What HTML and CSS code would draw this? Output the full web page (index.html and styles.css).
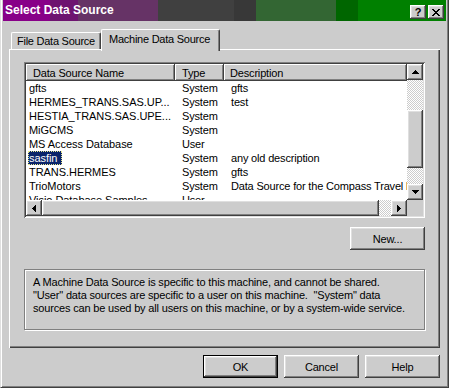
FILE: index.html
```html
<!DOCTYPE html>
<html>
<head>
<meta charset="utf-8">
<title>Select Data Source</title>
<link rel="stylesheet" href="styles.css">
</head>
<body>
<div class="window">
  <div class="titlebar">
    <span class="title">Select Data Source</span>
    <div class="caps">
      <div class="cap-btn bevel"><span class="qmark">?</span></div>
      <div class="cap-btn bevel">
        <svg width="8" height="7" viewBox="0 0 8 7"><g fill="#000"><rect x="0" y="0" width="2" height="1"/><rect x="6" y="0" width="2" height="1"/><rect x="1" y="1" width="2" height="1"/><rect x="5" y="1" width="2" height="1"/><rect x="2" y="2" width="4" height="1"/><rect x="3" y="3" width="2" height="1"/><rect x="2" y="4" width="4" height="1"/><rect x="1" y="5" width="2" height="1"/><rect x="5" y="5" width="2" height="1"/><rect x="0" y="6" width="2" height="1"/><rect x="6" y="6" width="2" height="1"/></g></svg>
      </div>
    </div>
  </div>
  <div class="body">
    <div class="tabs">
      <div class="tab">File Data Source</div>
      <div class="tab active">Machine Data Source</div>
    </div>
    <div class="panel">
      <div class="listview">
        <div class="lv-main">
          <div class="lv-content">
            <div class="lv-header">
              <div class="th">Data Source Name</div>
              <div class="th">Type</div>
              <div class="th th3">Description</div>
            </div>
            <div class="row"><div class="c1">gfts</div><div class="c2">System</div><div class="c3">gfts</div></div>
            <div class="row"><div class="c1">HERMES_TRANS.SAS.UP...</div><div class="c2">System</div><div class="c3">test</div></div>
            <div class="row"><div class="c1">HESTIA_TRANS.SAS.UPE...</div><div class="c2">System</div><div class="c3"></div></div>
            <div class="row"><div class="c1">MiGCMS</div><div class="c2">System</div><div class="c3"></div></div>
            <div class="row"><div class="c1">MS Access Database</div><div class="c2">User</div><div class="c3"></div></div>
            <div class="row"><div class="c1"><span class="sel">sasfin</span></div><div class="c2">System</div><div class="c3">any old description</div></div>
            <div class="row"><div class="c1">TRANS.HERMES</div><div class="c2">System</div><div class="c3">gfts</div></div>
            <div class="row"><div class="c1">TrioMotors</div><div class="c2">System</div><div class="c3">Data Source for the Compass Travel bookings</div></div>
            <div class="row"><div class="c1">Visio Database Samples</div><div class="c2">User</div><div class="c3"></div></div>
          </div>
          <div class="vscroll">
            <div class="sb-btn bevel"><svg width="7" height="4" viewBox="0 0 7 4"><path d="M3 0h1v1h1v1h1v1h1v1H0V3h1V2h1V1h1z"/></svg></div>
            <div class="track v-top"></div>
            <div class="thumb-v bevel"></div>
            <div class="track v-bot"></div>
            <div class="sb-btn bevel"><svg width="7" height="4" viewBox="0 0 7 4"><path d="M0 0h7v1H6v1H5v1H4v1H3V3H2V2H1V1H0z"/></svg></div>
          </div>
        </div>
        <div class="hscroll-row">
          <div class="hscroll">
            <div class="sb-btn bevel"><svg width="4" height="7" viewBox="0 0 4 7"><path d="M3 0h1v7H3V6H2V5H1V4H0V3h1V2h1V1h1z"/></svg></div>
            <div class="thumb-h bevel"></div>
            <div class="track h-right"></div>
            <div class="sb-btn bevel"><svg width="4" height="7" viewBox="0 0 4 7"><path d="M0 0h1v1h1v1h1v1h1v1H3v1H2v1H1v1H0z"/></svg></div>
          </div>
          <div class="corner"></div>
        </div>
      </div>
      <div class="new-row"><div class="btn bevel">New...</div></div>
      <div class="infobox">
        A Machine Data Source is specific to this machine, and cannot be shared.<br>
        "User" data sources are specific to a user on this machine. &nbsp;"System" data<br>
        sources can be used by all users on this machine, or by a system-wide service.
      </div>
    </div>
    <div class="buttons">
      <div class="btn default"><div class="btn-in bevel">OK</div></div>
      <div class="btn bevel">Cancel</div>
      <div class="btn bevel">Help</div>
    </div>
  </div>
</div>
</body>
</html>
```

FILE: styles.css
```css
* { box-sizing: border-box; }
html, body { margin: 0; padding: 0; }
body {
  width: 449px;
  height: 388px;
  overflow: hidden;
  background: #cccccc;
  font-family: "Liberation Sans", Arial, sans-serif;
  font-size: 11px;
  letter-spacing: -0.17px;
  color: #000;
}
.window {
  width: 449px;
  height: 388px;
  display: flex;
  flex-direction: column;
  background: #cccccc;
  border-left: 1px solid #dfdfdf;
  border-right: 1px solid #404040;
  border-bottom: 1px solid #404040;
  box-shadow: inset 1px 0 #ffffff, inset -1px -1px #808080;
  padding: 0 2px 1px 2px;
}
.titlebar {
  height: 21px;
  flex: none;
  display: flex;
  justify-content: space-between;
  align-items: flex-start;
  padding-left: 2px;
  background: linear-gradient(to right,
    #880088 0 47px, #6e1470 47px 75px, #663366 75px 155px,
    #404040 155px 231px, #383838 231px 253px, #336633 253px 333px,
    #006600 333px 355px, #008000 355px);
}
.title {
  color: #fff;
  font-weight: bold;
  font-size: 12px;
  letter-spacing: 0;
  line-height: 21px;
  white-space: nowrap;
}
.caps {
  display: flex;
  gap: 2px;
  margin-top: 5px;
  margin-right: 2px;
}
.bevel {
  background: #cccccc;
  box-shadow: inset -1px -1px #404040, inset 1px 1px #ffffff, inset -2px -2px #808080, inset 2px 2px #dfdfdf;
}
.cap-btn {
  width: 16px;
  height: 14px;
  display: flex;
  align-items: center;
  justify-content: center;
}
.qmark {
  font-weight: bold;
  font-size: 11px;
  line-height: 11px;
  margin-top: 1px;
  letter-spacing: 0;
}
.body {
  flex: 1;
  display: flex;
  flex-direction: column;
  padding: 8px 6px 8px 6px;
}
.tabs {
  display: flex;
  align-items: flex-end;
  height: 20px;
  padding-left: 2px;
  flex: none;
}
.tab {
  height: 17px;
  width: 90px;
  display: flex;
  align-items: center;
  padding-left: 5px;
  white-space: nowrap;
  letter-spacing: -0.25px;
  border-top: 1px solid #fff;
  border-left: 1px solid #fff;
  border-right: 1px solid #404040;
  border-radius: 2px 2px 0 0;
  box-shadow: inset -1px 0 #808080;
  background: #cccccc;
}
.tab.active {
  width: 119px;
  height: 22px;
  margin-bottom: -2px;
  padding-left: 7px;
  padding-bottom: 3px;
  position: relative;
  z-index: 1;
}
.panel {
  flex: 1;
  display: flex;
  flex-direction: column;
  padding: 13px 15px 0 15px;
  box-shadow: inset 1px 1px #ffffff, inset -1px -1px #404040, inset -2px -2px #808080;
}
.listview {
  width: 401px;
  height: 156px;
  padding: 2px;
  flex: none;
  box-shadow: inset 1px 1px #808080, inset -1px -1px #ffffff, inset 2px 2px #404040, inset -2px -2px #dfdfdf;
}
.lv-main {
  height: 136px;
  display: flex;
}
.lv-content {
  width: 381px;
  height: 136px;
  overflow: hidden;
  background: #fff;
}
.lv-header {
  display: grid;
  grid-template-columns: 149px 49px 183px;
  height: 17px;
}
.th {
  display: flex;
  align-items: center;
  padding-left: 7px;
  background: #cccccc;
  white-space: nowrap;
  box-shadow: inset -1px -1px #404040, inset 1px 1px #ffffff, inset -2px -2px #808080;
}
.th3 { padding-left: 6px; }
.row {
  display: grid;
  grid-template-columns: 149px 49px 183px;
  height: 14px;
  line-height: 14px;
}
.row > div {
  white-space: nowrap;
  overflow: hidden;
}
.c1 { padding-left: 3px; letter-spacing: -0.05px; }
.c2 { padding-left: 7px; }
.c3 { padding-left: 7px; }
.sel {
  display: inline-block;
  height: 14px;
  margin-left: -1px;
  padding: 0 5px 0 1px;
  background: #0a246a;
  color: #fff;
  outline: 1px dotted #e8e890;
  outline-offset: -1px;
}
.vscroll {
  width: 16px;
  display: flex;
  flex-direction: column;
}
.sb-btn {
  width: 16px;
  height: 16px;
  flex: none;
  display: flex;
  align-items: center;
  justify-content: center;
}
.track {
  background-color: #fff;
  background-image: conic-gradient(#cccccc 25%, #ffffff 0 50%, #cccccc 0 75%, #ffffff 0);
  background-size: 2px 2px;
}
.v-top { height: 30px; }
.thumb-v { height: 58px; }
.v-bot { height: 16px; }
.hscroll-row {
  height: 16px;
  display: flex;
}
.hscroll {
  width: 381px;
  display: flex;
}
.thumb-h { width: 337px; }
.h-right { width: 12px; }
.corner {
  width: 16px;
  background: #cccccc;
}
.new-row {
  margin-top: 9px;
  display: flex;
  justify-content: flex-end;
  flex: none;
}
.btn {
  width: 75px;
  height: 23px;
  display: flex;
  align-items: center;
  justify-content: center;
  flex: none;
}
.btn.default {
  border: 1px solid #000;
}
.btn-in {
  width: 100%;
  height: 100%;
  display: flex;
  align-items: center;
  justify-content: center;
}
.infobox {
  margin-top: 19px;
  width: 401px;
  height: 61px;
  flex: none;
  border: 1px solid #808080;
  box-shadow: inset 1px 1px #ffffff, 1px 1px #ffffff;
  padding: 6px 8px;
  line-height: 13px;
  white-space: nowrap;
}
.buttons {
  margin-top: 7px;
  display: flex;
  justify-content: flex-end;
  gap: 6px;
  flex: none;
}
```
